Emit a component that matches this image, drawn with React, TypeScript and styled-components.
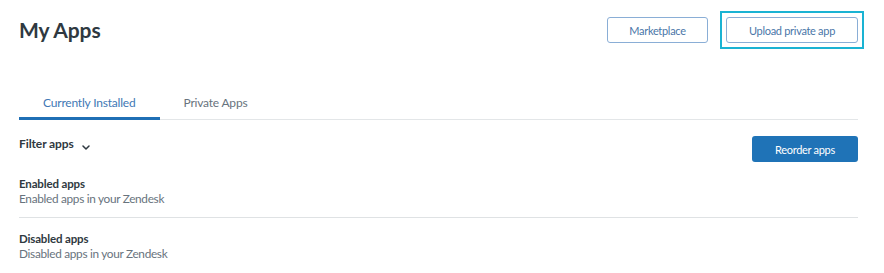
import styled, { createGlobalStyle } from 'styled-components';

const GlobalStyle = createGlobalStyle`
  body {
    margin: 0;
    background: #ffffff;
    font-family: Lato, "Open Sans", sans-serif;
    color: #2f3941;
  }
`;

const Page = styled.div`
  padding: 17px 26px 0 19px;
`;

const Header = styled.header`
  display: flex;
  justify-content: space-between;
  align-items: flex-start;
`;

const Title = styled.h1`
  margin: 0;
  font-size: 21px;
  font-weight: 700;
  line-height: 25px;
  letter-spacing: -0.1px;
  color: #2f3941;
`;

const Actions = styled.div`
  display: flex;
  gap: 18px;
`;

const OutlineButton = styled.button<{ $focused?: boolean }>`
  position: relative;
  height: 26px;
  width: ${(p) => (p.$focused ? '132px' : '101px')};
  padding: 0;
  border: 1px solid #8aaed6;
  border-radius: 3px;
  background: #fff;
  color: #4a76a8;
  font-family: inherit;
  font-size: 11px;
  letter-spacing: -0.3px;
  cursor: pointer;

  ${(p) =>
    p.$focused &&
    `
    &::after {
      content: '';
      position: absolute;
      inset: -7px;
      border: 2px solid #1ab3d3;
    }
  `}
`;

const TabList = styled.div`
  display: flex;
  margin-top: 47px;
  border-bottom: 1px solid #e3e6e8;
`;

const Tab = styled.div<{ $active?: boolean }>`
  padding: 4px 24px 5px;
  font-size: 12px;
  letter-spacing: -0.2px;
  line-height: 18px;
  color: ${(p) => (p.$active ? '#3f78b5' : '#68737d')};
  border-bottom: 3px solid ${(p) => (p.$active ? '#1f6fb5' : 'transparent')};
  margin-bottom: -1px;
`;

const FilterRow = styled.div`
  display: flex;
  justify-content: space-between;
  align-items: flex-start;
  margin-top: 16px;
`;

const FilterToggle = styled.div`
  display: flex;
  align-items: center;
  gap: 8px;
  font-size: 12px;
  letter-spacing: -0.1px;
  font-weight: 700;
  color: #2f3941;
  line-height: 16px;

  svg {
    margin-top: 7px;
  }
`;

const PrimaryButton = styled.button`
  height: 26px;
  width: 106px;
  padding: 0;
  border: none;
  border-radius: 3px;
  background: #1f73b7;
  color: #fff;
  font-family: inherit;
  font-size: 11px;
  letter-spacing: -0.3px;
  cursor: pointer;
`;

const Section = styled.div<{ $last?: boolean }>`
  padding: ${(p) => (p.$last ? '13px 0 0' : '14px 0 11px')};
  border-bottom: ${(p) => (p.$last ? 'none' : '1px solid #dfe2e4')};
`;

const SectionTitle = styled.div`
  font-size: 11.5px;
  font-weight: 700;
  letter-spacing: -0.15px;
  line-height: 15px;
  color: #2f3941;
`;

const SectionHint = styled.div`
  font-size: 11.8px;
  letter-spacing: -0.3px;
  line-height: 15px;
  color: #68737d;
`;

const Chevron = () => (
  <svg width="8" height="5" viewBox="0 0 8 5" fill="none">
    <path d="M1 1l3 3 3-3" stroke="#2f3941" strokeWidth="1.5" strokeLinecap="round" strokeLinejoin="round" />
  </svg>
);

const App = () => {
  return (
    <>
      <GlobalStyle />
      <Page>
        <Header>
          <Title>My Apps</Title>
          <Actions>
            <OutlineButton>Marketplace</OutlineButton>
            <OutlineButton $focused>Upload private app</OutlineButton>
          </Actions>
        </Header>

        <TabList>
          <Tab $active>Currently Installed</Tab>
          <Tab>Private Apps</Tab>
        </TabList>

        <FilterRow>
          <FilterToggle>
            Filter apps
            <Chevron />
          </FilterToggle>
          <PrimaryButton>Reorder apps</PrimaryButton>
        </FilterRow>

        <Section>
          <SectionTitle>Enabled apps</SectionTitle>
          <SectionHint>Enabled apps in your Zendesk</SectionHint>
        </Section>
        <Section $last>
          <SectionTitle>Disabled apps</SectionTitle>
          <SectionHint>Disabled apps in your Zendesk</SectionHint>
        </Section>
      </Page>
    </>
  );
};

export default App;
